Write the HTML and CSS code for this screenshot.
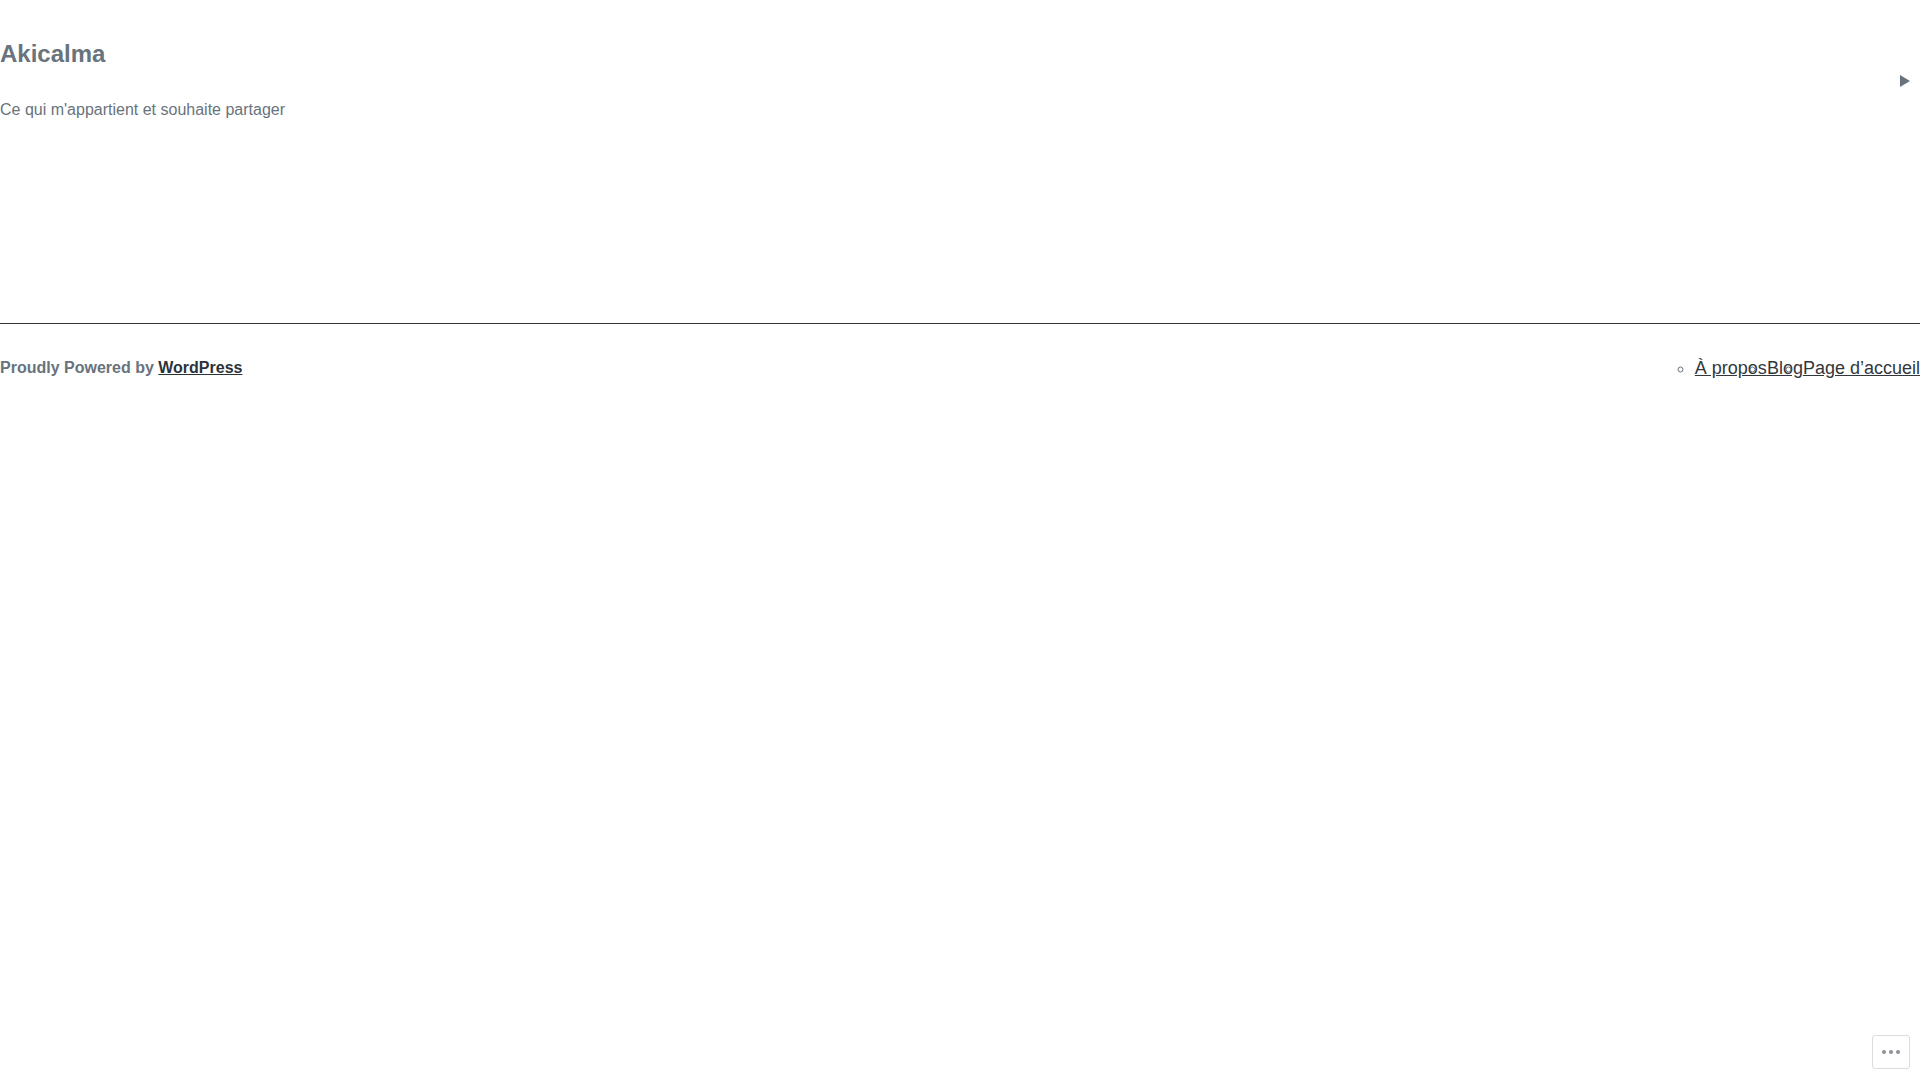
FILE: index.html
```html
<!DOCTYPE html>
<html lang="fr">
<head>
<meta charset="utf-8">
<title>Akicalma</title>
<link rel="stylesheet" href="styles.css">
</head>
<body>
<header class="site-header">
  <div class="branding">
    <h1 class="site-title">Akicalma</h1>
    <p class="site-tagline">Ce qui m'appartient et souhaite partager</p>
  </div>
  <svg class="toggle" width="10" height="12" viewBox="0 0 10 12" aria-hidden="true"><polygon points="0,0 10,6 0,12" fill="#68737d"/></svg>
</header>
<main class="site-main"></main>
<footer class="site-footer">
  <p class="credit">Proudly Powered by <a href="#">WordPress</a></p>
  <ul class="footer-nav">
    <li><a href="#">À propos</a></li>
    <li><a href="#">Blog</a></li>
    <li><a href="#">Page d’accueil</a></li>
  </ul>
</footer>
<button class="actions-btn" aria-label="Actions">
  <span class="dot"></span><span class="dot"></span><span class="dot"></span>
</button>
</body>
</html>
```
FILE: styles.css
```css
html, body {
  margin: 0;
  padding: 0;
  background: #fff;
}
body {
  font-family: "Liberation Sans", Arial, sans-serif;
  color: #68737d;
}
.site-header {
  display: flex;
  justify-content: space-between;
  align-items: center;
  padding-top: 40px;
  padding-right: 10px;
}
.branding {
  display: flex;
  flex-direction: column;
}
.site-title {
  margin: 0;
  font-size: 24px;
  font-weight: 700;
  line-height: normal;
  color: #68737d;
}
.site-tagline {
  margin: 33px 0 0;
  font-size: 16px;
  line-height: normal;
  color: #68737d;
}
.toggle {
  display: block;
  margin-top: 3px;
}
.site-main {
  height: 204px;
}
.site-footer {
  border-top: 1px solid #32373c;
  display: flex;
  justify-content: space-between;
  align-items: flex-start;
  padding-top: 35px;
}
.credit {
  margin: 0;
  font-size: 16px;
  font-weight: 700;
  line-height: normal;
  color: #68737d;
}
.credit a {
  color: #2c3338;
  text-decoration: underline;
}
.footer-nav {
  display: flex;
  margin: -1px 0 0;
  padding: 0;
  list-style: circle;
  font-size: 18px;
  line-height: normal;
}
.footer-nav a {
  color: #32373c;
  text-decoration: underline;
}
.actions-btn {
  position: fixed;
  right: 10px;
  bottom: 11px;
  width: 38px;
  height: 34px;
  padding: 0;
  background: #fff;
  border: 1px solid #dcdcde;
  border-radius: 3px;
  display: flex;
  align-items: center;
  justify-content: center;
  gap: 3px;
}
.dot {
  width: 4px;
  height: 4px;
  border-radius: 50%;
  background: #8c8f94;
}
```
